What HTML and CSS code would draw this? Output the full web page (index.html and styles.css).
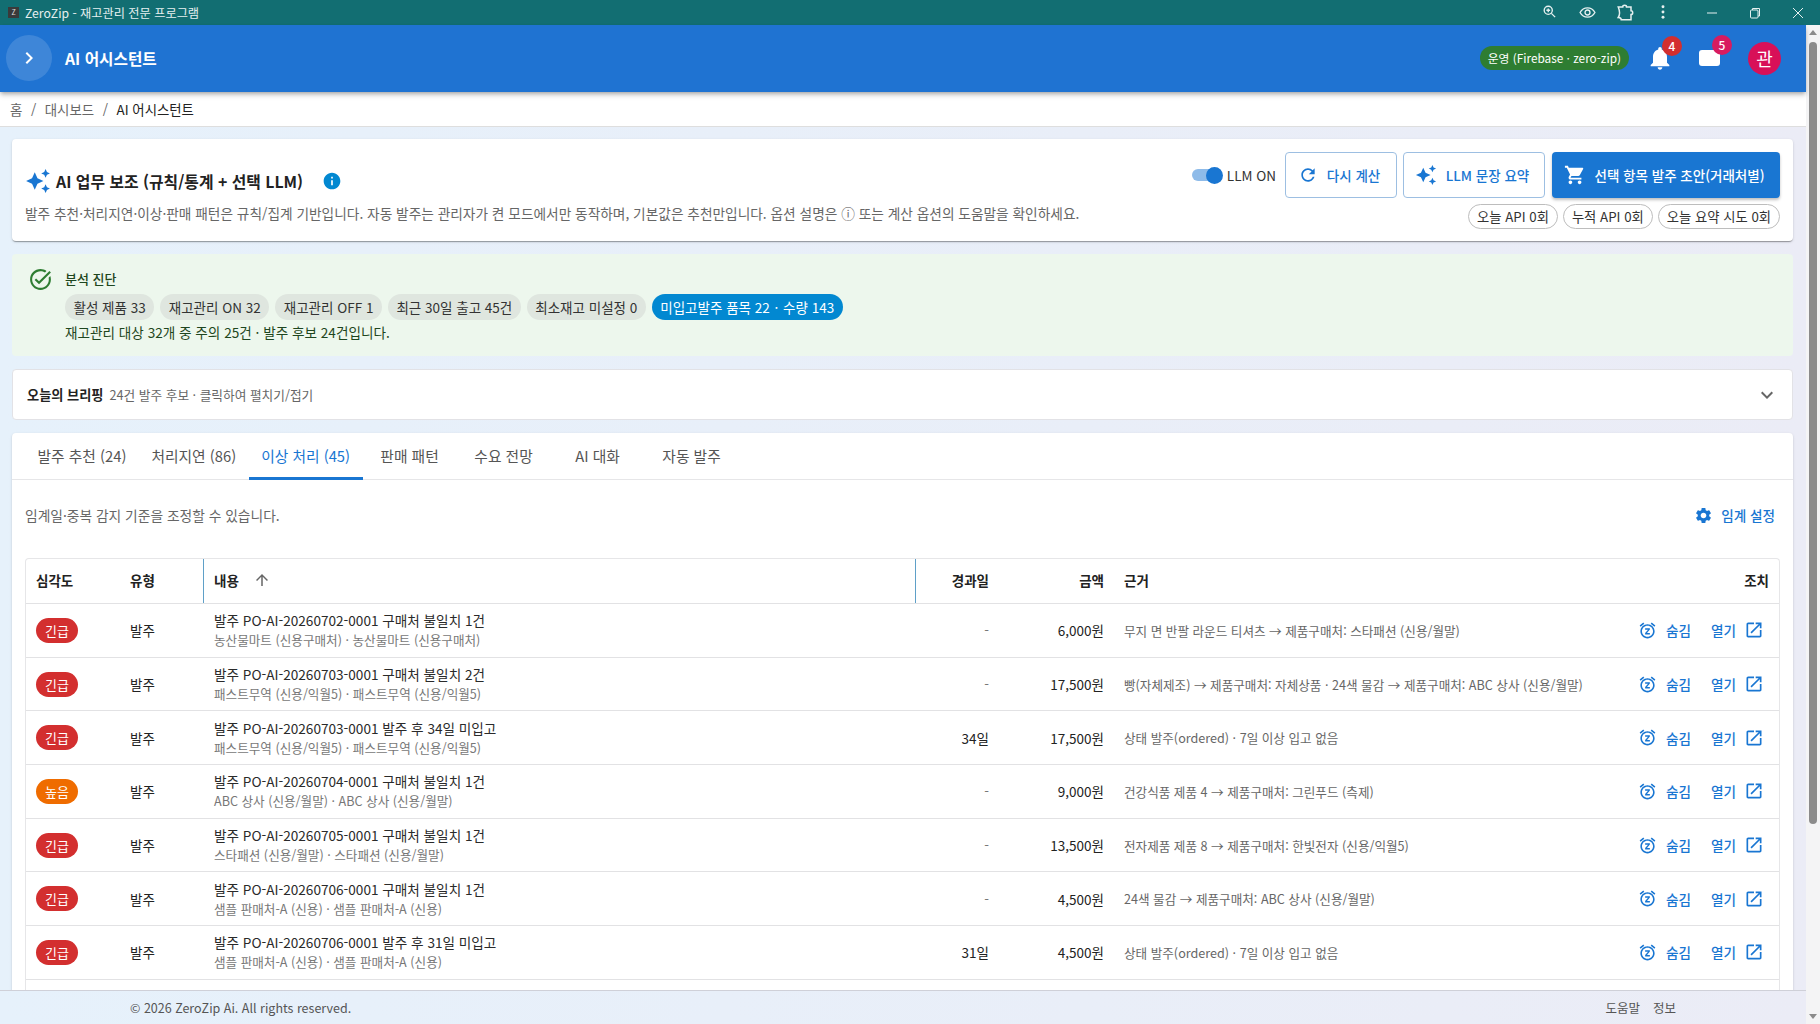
FILE: index.html
```html
<!DOCTYPE html>
<html lang="ko">
<head>
<meta charset="utf-8">
<title>ZeroZip - 재고관리 전문 프로그램</title>
<link rel="stylesheet" href="styles.css">
</head>
<body>
<svg class="defs" aria-hidden="true">
  <symbol id="i-spark" viewBox="0 0 24 24"><path d="M19 9l1.25-2.75L23 5l-2.75-1.25L19 1l-1.25 2.75L15 5l2.75 1.25L19 9zm-7.5.5L9 4 6.5 9.5 1 12l5.5 2.5L9 20l2.5-5.5L17 12l-5.5-2.5zM19 15l-1.25 2.75L15 19l2.75 1.25L19 23l1.25-2.75L23 19l-2.75-1.25L19 15z"/></symbol>
  <symbol id="i-snooze" viewBox="0 0 24 24"><path d="M9 11h3.63L9 15.2V17h6v-2h-3.63L15 10.8V9H9v2zm7.056-7.654 1.282-1.535 4.607 3.85-1.28 1.54zM3.336 7.19l-1.28-1.536L6.662 1.81l1.28 1.536zM12 6c3.86 0 7 3.14 7 7s-3.14 7-7 7-7-3.14-7-7 3.14-7 7-7m0-2c-4.97 0-9 4.03-9 9s4.03 9 9 9 9-4.03 9-9-4.03-9-9-9z"/></symbol>
  <symbol id="i-open" viewBox="0 0 24 24"><path d="M19 19H5V5h7V3H5c-1.11 0-2 .9-2 2v14c0 1.1.89 2 2 2h14c1.1 0 2-.9 2-2v-7h-2v7zM14 3v2h3.59l-9.83 9.83 1.41 1.41L19 6.41V10h2V3h-7z"/></symbol>
</svg>

<header class="titlebar">
  <span class="favicon">Z</span>
  <span class="titlebar-text">ZeroZip - 재고관리 전문 프로그램</span>
  <div class="titlebar-tools">
    <span class="tool"><svg width="15" height="15" viewBox="0 0 24 24" fill="none" stroke="currentColor" stroke-width="2.2"><circle cx="10" cy="10" r="6.5"/><path d="M15 15l6 6M10 7v6M7 10h6"/></svg></span>
    <span class="tool"><svg width="17" height="17" viewBox="0 0 24 24" fill="none" stroke="currentColor" stroke-width="1.9"><path d="M1.5 12C4 7.5 7.7 5.5 12 5.5S20 7.5 22.5 12C20 16.5 16.3 18.5 12 18.5S4 16.5 1.5 12z"/><circle cx="12" cy="12" r="3.5"/></svg></span>
    <span class="tool"><svg width="18" height="18" viewBox="0 0 24 24" fill="none" stroke="currentColor" stroke-width="2"><path d="M3 4h6c0-3 5-3 5 0h6v5c3 0 3 5 0 5v7H7c0-2-1.5-3-4-3 2-3 2-9 0-14z"/></svg></span>
    <span class="tool"><svg width="16" height="16" viewBox="0 0 24 24" fill="currentColor"><circle cx="12" cy="4" r="2.2"/><circle cx="12" cy="12" r="2.2"/><circle cx="12" cy="20" r="2.2"/></svg></span>
  </div>
  <div class="window-controls">
    <span class="win"><svg width="12" height="12" viewBox="0 0 12 12" stroke="currentColor" stroke-width="1"><path d="M1 6h10"/></svg></span>
    <span class="win"><svg width="12" height="12" viewBox="0 0 12 12" fill="none" stroke="currentColor" stroke-width="1"><rect x="1.5" y="3" width="7.5" height="8" rx="1"/><path d="M3.5 3V1.5h7V9H9"/></svg></span>
    <span class="win"><svg width="12" height="12" viewBox="0 0 12 12" stroke="currentColor" stroke-width="1"><path d="M1 1l10 10M11 1L1 11"/></svg></span>
  </div>
</header>

<div class="window">
  <div class="main">
    <div class="appbar">
      <button class="menu-btn" type="button"><svg width="24" height="24" viewBox="0 0 24 24" fill="#fff"><path d="M10 6 8.59 7.41 13.17 12l-4.58 4.59L10 18l6-6z"/></svg></button>
      <h1 class="appbar-title">AI 어시스턴트</h1>
      <div class="appbar-right">
        <span class="env-pill">운영 (Firebase · zero-zip)</span>
        <span class="app-icon bell">
          <svg width="28" height="28" viewBox="0 0 24 24" fill="#fff"><path d="M12 22c1.1 0 2-.9 2-2h-4c0 1.1.89 2 2 2zm6-6v-5c0-3.07-1.64-5.64-4.5-6.32V4c0-.83-.67-1.5-1.5-1.5s-1.5.67-1.5 1.5v.68C7.63 5.36 6 7.92 6 11v5l-2 2v1h16v-1l-2-2z"/></svg>
          <span class="count red">4</span>
        </span>
        <span class="app-icon box">
          <span class="box-shape"></span>
          <span class="count pink">5</span>
        </span>
        <span class="avatar">관</span>
      </div>
    </div>

    <nav class="breadcrumb">
      <span>홈</span><span class="sep">/</span><span>대시보드</span><span class="sep">/</span><span class="current">AI 어시스턴트</span>
    </nav>

    <div class="content">
      <section class="card head-card">
        <div class="head-left">
          <div class="head-title">
            <svg class="ic-blue" width="26" height="26"><use href="#i-spark"/></svg>
            <h2>AI 업무 보조 (규칙/통계 + 선택 LLM)</h2>
            <svg class="info" width="20" height="20" viewBox="0 0 24 24" fill="#0288d1"><path d="M12 2C6.48 2 2 6.48 2 12s4.48 10 10 10 10-4.48 10-10S17.52 2 12 2zm1 15h-2v-6h2v6zm0-8h-2V7h2v2z"/></svg>
          </div>
          <p class="head-sub">발주 추천·처리지연·이상·판매 패턴은 규칙/집계 기반입니다. 자동 발주는 관리자가 켠 모드에서만 동작하며, 기본값은 추천만입니다. 옵션 설명은 ⓘ 또는 계산 옵션의 도움말을 확인하세요.</p>
        </div>
        <div class="head-right">
          <div class="head-actions">
            <span class="toggle"><span class="toggle-track"></span><span class="toggle-thumb"></span></span>
            <span class="toggle-label">LLM ON</span>
            <button class="btn outline w-recalc" type="button"><svg class="ic-blue" width="20" height="20" viewBox="0 0 24 24"><path d="M17.65 6.35C16.2 4.9 14.21 4 12 4c-4.42 0-7.99 3.58-7.99 8s3.57 8 7.99 8c3.73 0 6.84-2.55 7.73-6h-2.08c-.82 2.33-3.04 4-5.65 4-3.31 0-6-2.69-6-6s2.69-6 6-6c1.66 0 3.14.69 4.22 1.78L13 11h7V4l-2.35 2.35z"/></svg>다시 계산</button>
            <button class="btn outline w-llm" type="button"><svg class="ic-blue" width="22" height="22"><use href="#i-spark"/></svg>LLM 문장 요약</button>
            <button class="btn solid w-order" type="button"><svg class="ic-white" width="22" height="22" viewBox="0 0 24 24"><path d="M7 18c-1.1 0-1.99.9-1.99 2S5.9 22 7 22s2-.9 2-2-.9-2-2-2zM1 2v2h2l3.6 7.59-1.35 2.45c-.16.28-.25.61-.25.96 0 1.1.9 2 2 2h12v-2H7.42c-.14 0-.25-.11-.25-.25l.03-.12.9-1.63h7.45c.75 0 1.41-.41 1.75-1.03l3.58-6.49c.08-.14.12-.31.12-.48 0-.55-.45-1-1-1H5.21l-.94-2H1zm16 16c-1.1 0-1.99.9-1.99 2s.89 2 1.99 2 2-.9 2-2-.9-2-2-2z"/></svg>선택 항목 발주 초안(거래처별)</button>
          </div>
          <div class="usage">
            <span class="usage-chip">오늘 API 0회</span>
            <span class="usage-chip">누적 API 0회</span>
            <span class="usage-chip">오늘 요약 시도 0회</span>
          </div>
        </div>
      </section>

      <section class="diag">
        <svg class="diag-icon" width="25" height="25" viewBox="0 0 24 24" fill="#2e7d32"><path d="M22 5.18 10.59 16.6l-4.24-4.24 1.41-1.41 2.83 2.83 10-10L22 5.18zm-2.21 5.04c.13.57.21 1.17.21 1.78 0 4.42-3.58 8-8 8s-8-3.58-8-8 3.58-8 8-8c1.58 0 3.04.46 4.28 1.25l1.44-1.44C16.1 2.67 14.13 2 12 2 6.48 2 2 6.48 2 12s4.48 10 10 10 10-4.48 10-10c0-1.19-.22-2.33-.6-3.39l-1.61 1.61z"/></svg>
        <div class="diag-body">
          <div class="diag-title">분석 진단</div>
          <div class="diag-chips">
            <span class="d-chip">활성 제품 33</span>
            <span class="d-chip">재고관리 ON 32</span>
            <span class="d-chip">재고관리 OFF 1</span>
            <span class="d-chip">최근 30일 출고 45건</span>
            <span class="d-chip">최소재고 미설정 0</span>
            <span class="d-chip info-chip">미입고발주 품목 22 <span class="dot">·</span> 수량 143</span>
          </div>
          <div class="diag-text">재고관리 대상 32개 중 주의 25건 · 발주 후보 24건입니다.</div>
        </div>
      </section>

      <section class="brief">
        <strong>오늘의 브리핑</strong>
        <span class="brief-sub">24건 발주 후보 · 클릭하여 펼치기/접기</span>
        <svg class="chev" width="24" height="24" viewBox="0 0 24 24" fill="#666"><path d="M16.59 8.59 12 13.17 7.41 8.59 6 10l6 6 6-6z"/></svg>
      </section>

      <section class="card panel">
        <div class="tabs">
          <span class="tab t-tight">발주 추천 (24)</span>
          <span class="tab t-tight">처리지연 (86)</span>
          <span class="tab t-tight active">이상 처리 (45)</span>
          <span class="tab">판매 패턴</span>
          <span class="tab">수요 전망</span>
          <span class="tab">AI 대화</span>
          <span class="tab">자동 발주</span>
        </div>
        <div class="panel-body">
          <div class="panel-tools">
            <span class="hint">임계일·중복 감지 기준을 조정할 수 있습니다.</span>
            <span class="link-btn"><svg class="ic-blue" width="19" height="19" viewBox="0 0 24 24"><path d="M19.14 12.94c.04-.3.06-.61.06-.94 0-.32-.02-.64-.07-.94l2.03-1.58c.18-.14.23-.41.12-.61l-1.92-3.32c-.12-.22-.37-.29-.59-.22l-2.39.96c-.5-.38-1.03-.7-1.62-.94l-.36-2.54c-.04-.24-.24-.41-.48-.41h-3.84c-.24 0-.43.17-.47.41l-.36 2.54c-.59.24-1.13.57-1.62.94l-2.39-.96c-.22-.08-.47 0-.59.22L2.74 8.87c-.12.21-.08.47.12.61l2.03 1.58c-.05.3-.09.63-.09.94s.02.64.07.94l-2.03 1.58c-.18.14-.23.41-.12.61l1.92 3.32c.12.22.37.29.59.22l2.39-.96c.5.38 1.03.7 1.62.94l.36 2.54c.05.24.24.41.48.41h3.84c.24 0 .44-.17.47-.41l.36-2.54c.59-.24 1.13-.56 1.62-.94l2.39.96c.22.08.47 0 .59-.22l1.92-3.32c.12-.22.07-.47-.12-.61l-2.01-1.58zM12 15.6c-1.98 0-3.6-1.62-3.6-3.6s1.62-3.6 3.6-3.6 3.6 1.62 3.6 3.6-1.62 3.6-3.6 3.6z"/></svg>임계 설정</span>
          </div>

          <div class="grid">
            <div class="row header">
              <div class="cell">심각도</div>
              <div class="cell">유형</div>
              <div class="cell sorted">내용<svg class="sort" width="18" height="18" viewBox="0 0 24 24" fill="#666"><path d="M4 12l1.41 1.41L11 7.83V20h2V7.83l5.58 5.59L20 12l-8-8-8 8z"/></svg></div>
              <div class="cell num">경과일</div>
              <div class="cell num">금액</div>
              <div class="cell">근거</div>
              <div class="cell num">조치</div>
            </div>

            <div class="row">
              <div class="cell"><span class="sev urgent">긴급</span></div>
              <div class="cell">발주</div>
              <div class="cell stack"><div class="main-line">발주 PO-AI-20260702-0001 구매처 불일치 1건</div><div class="sub-line">농산물마트 (신용구매처) · 농산물마트 (신용구매처)</div></div>
              <div class="cell num muted">-</div>
              <div class="cell num">6,000원</div>
              <div class="cell reason">무지 면 반팔 라운드 티셔츠 → 제품구매처: 스타패션 (신용/월말)</div>
              <div class="cell acts"><span class="act"><svg width="19" height="19"><use href="#i-snooze"/></svg>숨김</span><span class="act open">열기<svg width="20" height="20"><use href="#i-open"/></svg></span></div>
            </div>
            <div class="row">
              <div class="cell"><span class="sev urgent">긴급</span></div>
              <div class="cell">발주</div>
              <div class="cell stack"><div class="main-line">발주 PO-AI-20260703-0001 구매처 불일치 2건</div><div class="sub-line">패스트무역 (신용/익월5) · 패스트무역 (신용/익월5)</div></div>
              <div class="cell num muted">-</div>
              <div class="cell num">17,500원</div>
              <div class="cell reason">빵(자체제조) → 제품구매처: 자체상품 · 24색 물감 → 제품구매처: ABC 상사 (신용/월말)</div>
              <div class="cell acts"><span class="act"><svg width="19" height="19"><use href="#i-snooze"/></svg>숨김</span><span class="act open">열기<svg width="20" height="20"><use href="#i-open"/></svg></span></div>
            </div>
            <div class="row">
              <div class="cell"><span class="sev urgent">긴급</span></div>
              <div class="cell">발주</div>
              <div class="cell stack"><div class="main-line">발주 PO-AI-20260703-0001 발주 후 34일 미입고</div><div class="sub-line">패스트무역 (신용/익월5) · 패스트무역 (신용/익월5)</div></div>
              <div class="cell num">34일</div>
              <div class="cell num">17,500원</div>
              <div class="cell reason">상태 발주(ordered) · 7일 이상 입고 없음</div>
              <div class="cell acts"><span class="act"><svg width="19" height="19"><use href="#i-snooze"/></svg>숨김</span><span class="act open">열기<svg width="20" height="20"><use href="#i-open"/></svg></span></div>
            </div>
            <div class="row">
              <div class="cell"><span class="sev high">높음</span></div>
              <div class="cell">발주</div>
              <div class="cell stack"><div class="main-line">발주 PO-AI-20260704-0001 구매처 불일치 1건</div><div class="sub-line">ABC 상사 (신용/월말) · ABC 상사 (신용/월말)</div></div>
              <div class="cell num muted">-</div>
              <div class="cell num">9,000원</div>
              <div class="cell reason">건강식품 제품 4 → 제품구매처: 그린푸드 (측제)</div>
              <div class="cell acts"><span class="act"><svg width="19" height="19"><use href="#i-snooze"/></svg>숨김</span><span class="act open">열기<svg width="20" height="20"><use href="#i-open"/></svg></span></div>
            </div>
            <div class="row">
              <div class="cell"><span class="sev urgent">긴급</span></div>
              <div class="cell">발주</div>
              <div class="cell stack"><div class="main-line">발주 PO-AI-20260705-0001 구매처 불일치 1건</div><div class="sub-line">스타패션 (신용/월말) · 스타패션 (신용/월말)</div></div>
              <div class="cell num muted">-</div>
              <div class="cell num">13,500원</div>
              <div class="cell reason">전자제품 제품 8 → 제품구매처: 한빛전자 (신용/익월5)</div>
              <div class="cell acts"><span class="act"><svg width="19" height="19"><use href="#i-snooze"/></svg>숨김</span><span class="act open">열기<svg width="20" height="20"><use href="#i-open"/></svg></span></div>
            </div>
            <div class="row">
              <div class="cell"><span class="sev urgent">긴급</span></div>
              <div class="cell">발주</div>
              <div class="cell stack"><div class="main-line">발주 PO-AI-20260706-0001 구매처 불일치 1건</div><div class="sub-line">샘플 판매처-A (신용) · 샘플 판매처-A (신용)</div></div>
              <div class="cell num muted">-</div>
              <div class="cell num">4,500원</div>
              <div class="cell reason">24색 물감 → 제품구매처: ABC 상사 (신용/월말)</div>
              <div class="cell acts"><span class="act"><svg width="19" height="19"><use href="#i-snooze"/></svg>숨김</span><span class="act open">열기<svg width="20" height="20"><use href="#i-open"/></svg></span></div>
            </div>
            <div class="row">
              <div class="cell"><span class="sev urgent">긴급</span></div>
              <div class="cell">발주</div>
              <div class="cell stack"><div class="main-line">발주 PO-AI-20260706-0001 발주 후 31일 미입고</div><div class="sub-line">샘플 판매처-A (신용) · 샘플 판매처-A (신용)</div></div>
              <div class="cell num">31일</div>
              <div class="cell num">4,500원</div>
              <div class="cell reason">상태 발주(ordered) · 7일 이상 입고 없음</div>
              <div class="cell acts"><span class="act"><svg width="19" height="19"><use href="#i-snooze"/></svg>숨김</span><span class="act open">열기<svg width="20" height="20"><use href="#i-open"/></svg></span></div>
            </div>
            <div class="row row-partial">
              <div class="cell empty"></div>
              <div class="cell empty"></div>
              <div class="cell stack"><div class="main-line">발주 PO-AI-20260707-0001 구매처 불일치 1건</div></div>
            </div>
          </div>
        </div>
      </section>
    </div>

    <footer class="footer">
      <span>© 2026 ZeroZip Ai. All rights reserved.</span>
      <span class="footer-links"><span>도움말</span><span>정보</span></span>
    </footer>
  </div>

  <div class="scrollbar">
    <span class="arrow up"></span>
    <span class="thumb"></span>
    <span class="arrow down"></span>
  </div>
</div>
</body>
</html>
```

FILE: styles.css
```css
* { box-sizing: border-box; }
html, body { height: 100%; }
body {
  margin: 0;
  overflow: hidden;
  display: flex;
  flex-direction: column;
  font-family: "Noto Sans CJK KR", "Noto Sans", sans-serif;
  font-size: 13px;
  color: #222;
  background: #fff;
}
h1, h2, p { margin: 0; }
button { font-family: inherit; }
.defs { display: none; }
.ic-blue { fill: #1976d2; flex: none; }
.ic-white { fill: #fff; flex: none; }

/* Title bar */
.titlebar {
  height: 25px;
  flex: none;
  display: flex;
  align-items: center;
  padding-left: 8px;
  background: #126e72;
  color: #e6f0f0;
}
.favicon {
  width: 11px;
  height: 11px;
  background: #3a3a3a;
  color: #ddd;
  font-size: 7px;
  line-height: 11px;
  text-align: center;
}
.titlebar-text { margin-left: 6px; font-size: 12.2px; }
.titlebar-tools { margin-left: auto; margin-right: 8px; display: flex; }
.tool { width: 38px; display: flex; justify-content: center; }
.window-controls { display: flex; padding-right: 1px; }
.win { width: 43px; display: flex; justify-content: center; }

.window { flex: 1; min-height: 0; display: flex; }
.main { flex: 1; min-width: 0; display: flex; flex-direction: column; }

/* Scrollbar */
.scrollbar {
  width: 14px;
  flex: none;
  display: flex;
  flex-direction: column;
  align-items: center;
  padding: 5px 0;
  background: #f4f4f5;
}
.arrow { width: 0; height: 0; border-left: 4px solid transparent; border-right: 4px solid transparent; }
.arrow.up { border-bottom: 5px solid #8b8b8b; }
.arrow.down { border-top: 5px solid #8b8b8b; margin-top: auto; }
.thumb { width: 8px; height: 782px; margin-top: 7px; border-radius: 4px; background: #8b8b8b; }

/* App bar */
.appbar {
  position: relative;
  z-index: 2;
  height: 67px;
  flex: none;
  display: flex;
  align-items: center;
  padding: 0 25px 1px 6px;
  background: #1f73d2;
  color: #fff;
  box-shadow: 0 2px 4px -1px rgba(0,0,0,.3), 0 4px 5px rgba(0,0,0,.12);
}
.menu-btn {
  width: 46px;
  height: 46px;
  padding: 0;
  border: 0;
  border-radius: 50%;
  display: flex;
  align-items: center;
  justify-content: center;
  background: rgba(255,255,255,.14);
}
.appbar-title { margin-left: 13px; font-size: 15.7px; font-weight: 700; }
.appbar-right { margin-left: auto; display: flex; align-items: center; }
.env-pill {
  height: 24px;
  padding: 0 8px;
  border-radius: 12px;
  background: #2e7d32;
  font-size: 11.8px;
  line-height: 24px;
}
.app-icon { position: relative; display: flex; align-items: center; justify-content: center; }
.bell { width: 28px; height: 28px; margin-left: 17px; }
.box { width: 21px; height: 16px; margin-left: 25px; }
.box-shape { width: 21px; height: 16px; border-radius: 3px; background: #fff; }
.count {
  position: absolute;
  width: 20px;
  height: 20px;
  border-radius: 50%;
  font-size: 12px;
  font-weight: 500;
  line-height: 20px;
  text-align: center;
  color: #fff;
}
.bell .count { left: 16px; top: -8px; }
.box .count { left: 13px; top: -15px; }
.red { background: #d32f2f; }
.pink { background: #d81b60; }
.avatar {
  width: 33px;
  height: 33px;
  margin-left: 28px;
  border-radius: 50%;
  background: #d81058;
  font-size: 18px;
  line-height: 33px;
  text-align: center;
}

/* Breadcrumb */
.breadcrumb {
  height: 35px;
  flex: none;
  display: flex;
  align-items: center;
  padding-left: 10px;
  background: #fff;
  border-bottom: 1px solid #dedede;
  color: #666;
  font-size: 13.4px;
}
.breadcrumb .sep { margin: 0 8.6px; }
.breadcrumb .current { color: #222; }

/* Content */
.content {
  flex: 1;
  min-height: 0;
  overflow: hidden;
  display: flex;
  flex-direction: column;
  gap: 13px;
  padding: 12px 13px 0 12px;
  background: linear-gradient(90deg, #e6f1fb, #ebecf6);
}
.card {
  background: #fff;
  border-radius: 4px;
  box-shadow: 0 2px 1px -1px rgba(0,0,0,.2), 0 1px 1px rgba(0,0,0,.14), 0 1px 3px rgba(0,0,0,.12);
}
.head-card {
  height: 102px;
  flex: none;
  display: flex;
  justify-content: space-between;
  padding: 13px;
}
.head-left { padding-top: 15px; }
.head-title { display: flex; align-items: center; height: 28px; }
.head-title h2 { margin-left: 5px; font-size: 15.85px; font-weight: 700; }
.info { margin-left: 19px; }
.head-sub { margin-top: 8px; font-size: 13.7px; color: #666; white-space: nowrap; }
.head-right { display: flex; flex-direction: column; align-items: flex-end; gap: 6px; }
.head-actions { display: flex; align-items: center; gap: 6px; }
.toggle { position: relative; width: 31px; height: 22px; display: block; }
.toggle-track { position: absolute; left: 0; top: 5px; width: 27px; height: 12px; border-radius: 6px; background: #8ebbe9; }
.toggle-thumb { position: absolute; right: 0; top: 3px; width: 17px; height: 17px; border-radius: 50%; background: #1976d2; }
.toggle-label { margin: 0 3px 0 -2px; font-size: 13.5px; color: #333; }
.btn {
  height: 46px;
  padding: 0 4px 0 0;
  display: flex;
  align-items: center;
  justify-content: center;
  gap: 9px;
  border-radius: 4px;
  font-size: 13.5px;
  font-weight: 500;
}
.outline { background: #fff; border: 1px solid #9dbfe2; color: #1976d2; }
.solid { background: #1976d2; border: 0; color: #fff; box-shadow: 0 2px 3px rgba(0,0,0,.25); }
.w-recalc { width: 112px; }
.w-llm { width: 142px; }
.w-order { width: 228px; margin-left: 1px; }
.usage { display: flex; gap: 5px; }
.usage-chip {
  height: 25px;
  padding: 0 8px;
  border: 1px solid #bdbdbd;
  border-radius: 13px;
  font-size: 13.3px;
  line-height: 23px;
  color: #333;
}

/* Diagnosis */
.diag {
  height: 102px;
  flex: none;
  display: flex;
  padding: 13px 16px 0;
  background: #edf7ed;
  border-radius: 4px;
  color: #1e4620;
}
.diag-icon { flex: none; }
.diag-body { margin-left: 12px; }
.diag-title { margin-top: 2px; font-size: 13px; font-weight: 500; line-height: 20px; }
.diag-chips { display: flex; gap: 6px; margin-top: 5px; }
.d-chip {
  height: 26px;
  padding: 0 8.5px;
  border-radius: 13px;
  background: #dfe6df;
  font-size: 13.5px;
  line-height: 26px;
  color: #333;
}
.info-chip { background: #0288d1; color: #fff; }
.dot { margin: 0 1px; }
.diag-text { margin-top: 3px; font-size: 13.6px; line-height: 18px; }

/* Briefing */
.brief {
  height: 51px;
  flex: none;
  display: flex;
  align-items: center;
  gap: 6px;
  padding: 0 13px 0 14px;
  background: #fff;
  border: 1px solid #e2e2e6;
  border-radius: 4px;
  font-size: 13.2px;
}
.brief strong { font-weight: 700; }
.brief-sub { font-size: 12.7px; color: #666; }
.chev { margin-left: auto; }

/* Panel */
.panel { flex: none; }
.tabs {
  height: 47px;
  display: flex;
  padding-left: 13px;
  border-bottom: 1px solid #e6e6e8;
}
.tab {
  min-width: 94px;
  display: flex;
  align-items: center;
  justify-content: center;
  padding-bottom: 2px;
  font-size: 14.75px;
  color: #555;
}
.tab.t-tight { min-width: 0; padding-left: 12.5px; padding-right: 12.5px; }
.tab.active { color: #1976d2; border-bottom: 3px solid #1976d2; padding-bottom: 0; margin-bottom: -1px; }
.panel-body { padding: 0 13px; }
.panel-tools { height: 78px; display: flex; align-items: center; justify-content: space-between; padding: 0 5px 8px 0; }
.hint { font-size: 13.75px; color: #666; }
.link-btn { display: flex; align-items: center; gap: 8px; font-size: 13.6px; font-weight: 500; color: #1976d2; }

/* Data grid */
.grid { border: 1px solid #e6e6e8; border-bottom: 0; border-radius: 4px; }
.row {
  height: 53.7px;
  display: grid;
  grid-template-columns: 94px 83px 713px 83px 115px 1fr 170px;
  border-bottom: 1px solid #e2e2e4;
}
.row.header { height: 45px; }
.cell {
  min-width: 0;
  display: flex;
  align-items: center;
  padding: 0 10px;
  font-size: 13.5px;
  white-space: nowrap;
}
.row.header .cell { padding-bottom: 3px; font-weight: 700; color: #222; }
.cell.num { justify-content: flex-end; }
.cell.muted { color: #777; }
.cell.stack { flex-direction: column; align-items: flex-start; justify-content: center; padding: 0 10px 1px 11px; }
.row-partial .cell.stack { justify-content: flex-start; padding-top: 6px; }
.row.header .cell.sorted { padding-bottom: 0; border-left: 1px solid #5fa0c8; border-right: 1px solid #5fa0c8; gap: 14px; padding-bottom: 3px; }
.main-line { margin-bottom: 1px; font-size: 13.6px; line-height: 20px; color: #2a2a2a; }
.sub-line { font-size: 12.6px; line-height: 18px; color: #777; }
.cell.reason { font-size: 12.6px; color: #666; }
.sev {
  width: 42px;
  height: 25px;
  border-radius: 12.5px;
  font-size: 13px;
  line-height: 25px;
  text-align: center;
  color: #fff;
}
.urgent { background: #d32f2f; }
.high { background: #ef6c00; }
.acts { justify-content: flex-end; gap: 20px; padding-right: 15px; color: #1976d2; }
.act { display: flex; align-items: center; gap: 9px; font-size: 13.6px; font-weight: 500; }
.act svg { fill: #1976d2; }
.act.open { gap: 8px; }

/* Footer */
.footer {
  position: relative;
  z-index: 2;
  height: 34px;
  flex: none;
  display: flex;
  align-items: center;
  justify-content: space-between;
  padding: 0 130px;
  background: linear-gradient(90deg, #e6f1fb, #ebecf6);
  border-top: 1px solid #cfd0d8;
  font-size: 12.5px;
  color: #555;
}
.footer-links { display: flex; gap: 13px; }
```
